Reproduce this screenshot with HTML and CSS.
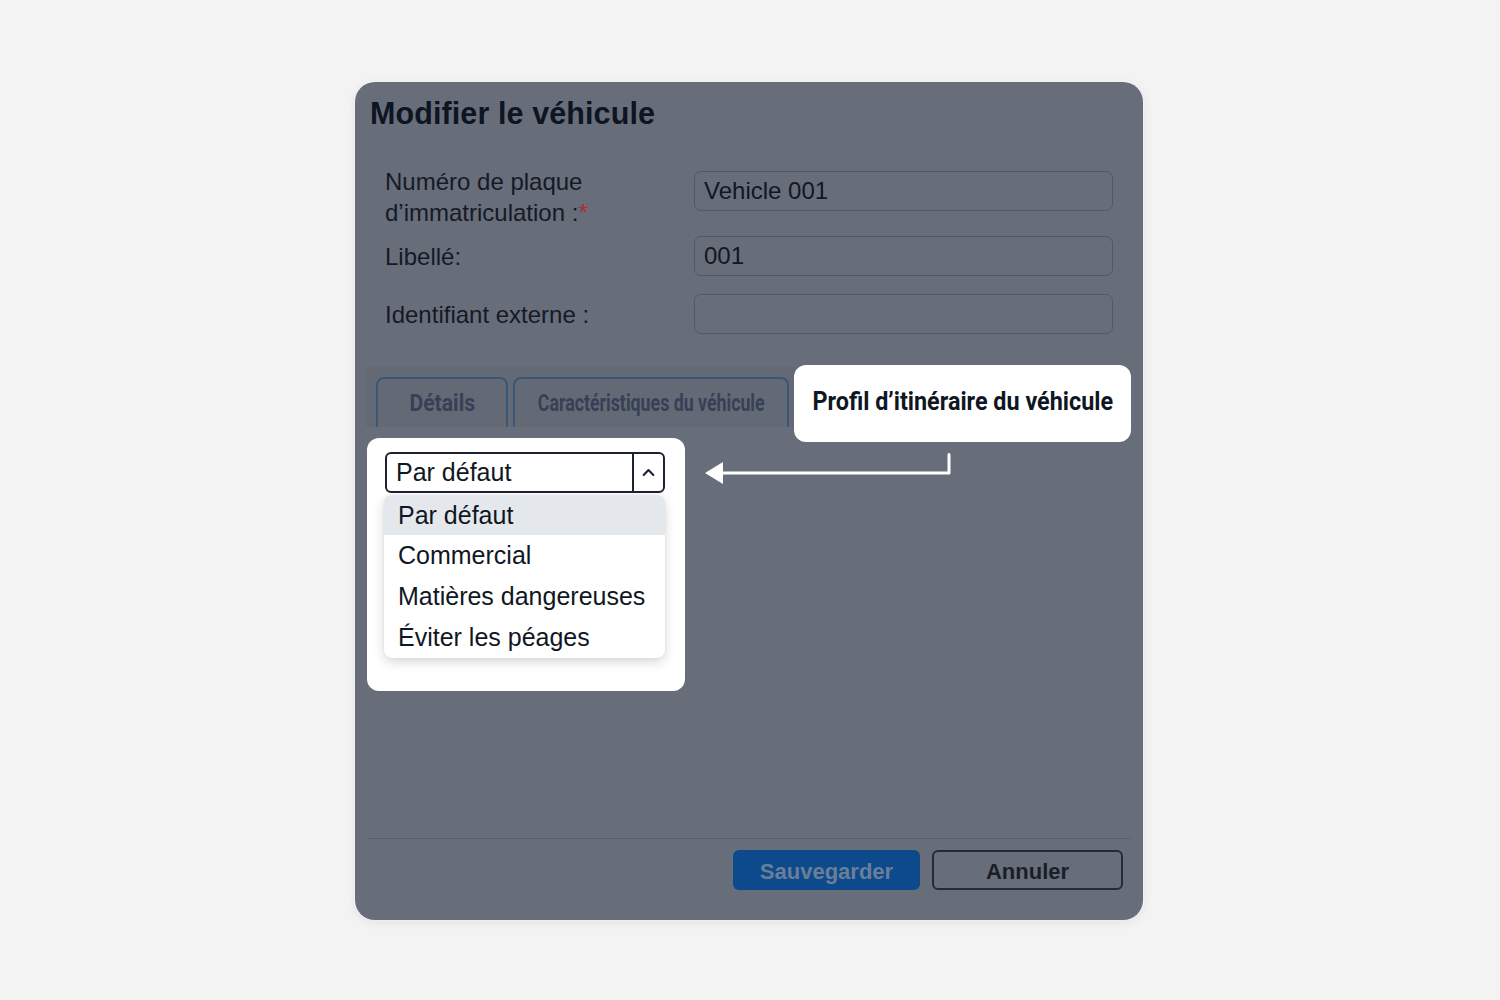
FILE: index.html
```html
<!DOCTYPE html>
<html lang="fr">
<head>
<meta charset="utf-8">
<title>Modifier le véhicule</title>
<link rel="stylesheet" href="styles.css">
</head>
<body>
<div class="page">
  <div class="modal">
    <h1 class="title">Modifier le véhicule</h1>
    <div class="form">
      <div class="row row-top">
        <div class="label">Numéro de plaque<br>d’immatriculation :<span class="req">*</span></div>
        <div class="input">Vehicle 001</div>
      </div>
      <div class="row row-2">
        <div class="label">Libellé:</div>
        <div class="input">001</div>
      </div>
      <div class="row row-3">
        <div class="label">Identifiant externe :</div>
        <div class="input"></div>
      </div>
    </div>
    <div class="tabs">
      <div class="tab tab-details"><span class="tab-text t1">Détails</span></div>
      <div class="tab tab-car"><span class="tab-text t2">Caractéristiques du véhicule</span></div>
      <div class="tab-active"><span class="active-text">Profil d’itinéraire du véhicule</span></div>
    </div>
    <div class="content">
      <div class="panel">
        <div class="select">
          <span class="select-value">Par défaut</span>
          <span class="select-btn">
            <svg width="30" height="37" viewBox="0 0 30 37"><path d="M10 21 L15 16 L20 21" fill="none" stroke="#1c2434" stroke-width="2.2" stroke-linecap="round" stroke-linejoin="round"/></svg>
          </span>
        </div>
        <ul class="options">
          <li class="opt selected">Par défaut</li>
          <li class="opt">Commercial</li>
          <li class="opt">Matières dangereuses</li>
          <li class="opt">Éviter les péages</li>
        </ul>
      </div>
      <svg class="arrow" width="248" height="34" viewBox="0 0 248 34">
        <path d="M244 1.5 L244 20 L17 20" fill="none" stroke="#ffffff" stroke-width="3" stroke-linejoin="round" stroke-linecap="round"/>
        <path d="M0 20 L18 9 L18 31 Z" fill="#ffffff"/>
      </svg>
    </div>
    <div class="footer">
      <button class="btn btn-save">Sauvegarder</button>
      <button class="btn btn-cancel">Annuler</button>
    </div>
  </div>
</div>
</body>
</html>
```

FILE: styles.css
```css
* { box-sizing: border-box; }
html, body { margin: 0; padding: 0; }
body {
  background: #f3f3f3;
  font-family: "Liberation Sans", Arial, sans-serif;
  width: 1500px;
  height: 1000px;
  overflow: hidden;
}
.page {
  display: flex;
  justify-content: center;
  padding-top: 82px;
  padding-right: 2px;
}
.modal {
  width: 788px;
  height: 838px;
  background: #686d7a;
  border-radius: 20px;
  padding: 0 12px;
  display: flex;
  flex-direction: column;
  box-shadow: 0 2px 10px rgba(0,0,0,0.08), 0 0 0 1px rgba(255,255,255,0.5);
}
.title {
  margin: 0;
  padding-top: 13px;
  padding-left: 3px;
  font-size: 30.5px;
  line-height: 36px;
  font-weight: bold;
  color: #0e1522;
  letter-spacing: 0.1px;
}
.form {
  margin-top: 35px;
  padding-left: 18px;
}
.row {
  display: flex;
  align-items: center;
  height: 48px;
}
.row-top {
  align-items: flex-start;
  height: 62px;
}
.row-2 { margin-top: 4px; }
.row-3 { margin-top: 10px; }
.label {
  width: 309px;
  font-size: 24px;
  line-height: 31px;
  color: #141a26;
}
.req { color: #a8302b; }
.input {
  width: 419px;
  height: 40px;
  border: 1.5px solid #525866;
  border-radius: 7px;
  font-size: 24px;
  line-height: 37px;
  padding-left: 9px;
  color: #111724;
}
.row-top .input { margin-top: 5px; }
.tabs {
  margin-top: 29px;
  margin-left: -1px;
  height: 60px;
  background: #646976;
  display: flex;
  align-items: flex-start;
  padding: 10px 0 0 10px;
  gap: 5px;
}
.tab {
  height: 50px;
  border: 2px solid #3c5677;
  border-bottom: none;
  border-radius: 8px 8px 0 0;
  display: flex;
  align-items: center;
  justify-content: center;
  overflow: hidden;
}
.tab-details { width: 132px; }
.tab-car { width: 276px; }
.tab-text {
  display: inline-block;
  font-family: Roboto, "Liberation Sans", sans-serif;
  font-weight: bold;
  font-size: 24px;
  color: #364156;
  white-space: nowrap;
}
.t1 { transform: scaleX(0.88); }
.t2 { transform: scaleX(0.74); }
.tab-active {
  margin-top: -12px;
  width: 337px;
  height: 77px;
  background: #ffffff;
  border-radius: 12px;
  display: flex;
  justify-content: center;
  padding-top: 23px;
}
.active-text {
  display: inline-block;
  font-family: Roboto, "Liberation Sans", sans-serif;
  font-weight: bold;
  font-size: 25px;
  line-height: 28px;
  color: #0f1624;
  white-space: nowrap;
  transform: scaleX(0.935);
}
.content {
  flex: 1;
  display: flex;
  align-items: flex-start;
}
.panel {
  margin-top: 11px;
  width: 318px;
  height: 253px;
  background: #ffffff;
  border-radius: 12px;
  padding: 14px 0 0 18px;
}
.select {
  width: 280px;
  height: 41px;
  border: 2px solid #1c2230;
  border-radius: 6px;
  display: flex;
  align-items: center;
}
.select-value {
  flex: 1;
  font-size: 25px;
  color: #111722;
  padding-left: 9px;
  line-height: 37px;
}
.select-btn {
  width: 31px;
  height: 37px;
  border-left: 2px solid #1c2230;
  display: flex;
}
.options {
  list-style: none;
  margin: 2px 0 0 -1px;
  padding: 0;
  width: 281px;
  background: #ffffff;
  border-radius: 8px;
  box-shadow: 0 4px 12px rgba(0,0,0,0.16), 0 0 2px rgba(0,0,0,0.08);
  overflow: hidden;
}
.opt {
  height: 41px;
  line-height: 41px;
  padding-left: 14px;
  font-size: 25px;
  color: #111722;
}
.opt.selected {
  background: #e4e8ed;
  height: 40px;
  line-height: 40px;
}
.arrow {
  margin-top: 26px;
  margin-left: 20px;
  display: block;
}
.footer {
  border-top: 1.5px solid #5a5f6b;
  display: flex;
  justify-content: flex-end;
  gap: 12px;
  padding: 11px 8px 30px 0;
}
.btn {
  height: 40px;
  border-radius: 6px;
  font-family: "Liberation Sans", Arial, sans-serif;
  font-weight: bold;
  font-size: 22px;
  padding: 3px 0 0 0;
  cursor: pointer;
}
.btn-save {
  width: 187px;
  background: #0d4a8b;
  border: none;
  color: #6b7e99;
}
.btn-cancel {
  width: 191px;
  background: transparent;
  border: 2px solid #252a34;
  color: #191e27;
}
```
